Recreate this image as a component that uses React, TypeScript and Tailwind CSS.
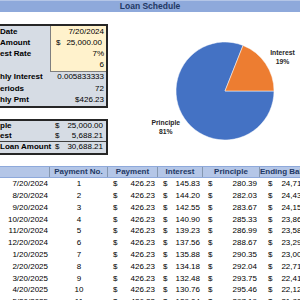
const schedule = [
  ['7/20/2024', 1, '426.23', '145.83', '280.39', '24,719.61'],
  ['8/20/2024', 2, '426.23', '144.20', '282.03', '24,437.58'],
  ['9/20/2024', 3, '426.23', '142.55', '283.67', '24,153.91'],
  ['10/20/2024', 4, '426.23', '140.90', '285.33', '23,868.58'],
  ['11/20/2024', 5, '426.23', '139.23', '286.99', '23,581.59'],
  ['12/20/2024', 6, '426.23', '137.56', '288.67', '23,292.92'],
  ['1/20/2025', 7, '426.23', '135.88', '290.35', '23,002.57'],
  ['2/20/2025', 8, '426.23', '134.18', '292.04', '22,710.53'],
  ['3/20/2025', 9, '426.23', '132.48', '293.75', '22,416.78'],
  ['4/20/2025', 10, '426.23', '130.76', '295.46', '22,121.32'],
  ['5/20/2025', 11, '426.23', '129.04', '297.19', '21,824.13'],
]

// accounting style cell: "$" on the left, amount on the right
function Money({ value, className = '' }: { value: string; className?: string }) {
  return (
    <div className={`flex justify-between pl-[5px] pr-[3px] ${className}`}>
      <span>$</span>
      <span>{value}</span>
    </div>
  )
}

function InputRow({ label, children, last = false }: { label: string; children: React.ReactNode; last?: boolean }) {
  return (
    <div className="flex h-[11.4px] items-center">
      <div className="w-[50px] h-full bg-[#D6DCE4] font-bold flex items-center">{label}</div>
      <div
        className={`flex-1 h-full bg-[#FFF2CC] border-l border-[#7f7f7f] flex items-center justify-end pr-[2px] ${
          last ? 'border-b' : ''
        }`}
      >
        {children}
      </div>
    </div>
  )
}

function CalcRow({ label, value }: { label: string; value: string }) {
  return (
    <div className="flex h-[11.4px] items-center justify-between bg-[#D6DCE4] pr-[2px]">
      <span className="font-bold">{label}</span>
      <span>{value}</span>
    </div>
  )
}

function PieChart() {
  const cx = 117
  const cy = 79
  const r = 49
  const a = (68.4 * Math.PI) / 180
  const px = cx + r * Math.cos(a)
  const py = cy - r * Math.sin(a)
  return (
    <svg width="192" height="142" viewBox="0 0 192 142">
      <path d={`M${cx},${cy} L${px},${py} A${r},${r} 0 1 0 ${cx + r},${cy} Z`} fill="#4472C4" stroke="#fff" strokeWidth="0.5" />
      <path d={`M${cx},${cy} L${cx + r},${cy} A${r},${r} 0 0 0 ${px},${py} Z`} fill="#ED7D31" stroke="#fff" strokeWidth="0.5" />
      <g fontFamily="'Liberation Sans', Arial, sans-serif" fontSize="6.8" fontWeight="bold" fill="#262626" textAnchor="middle">
        <text x="174.5" y="43">Interest</text>
        <text x="174.5" y="52">19%</text>
        <text x="57.8" y="112.5">Principle</text>
        <text x="57.8" y="121.5">81%</text>
      </g>
    </svg>
  )
}

export default function App() {
  return (
    <div className="w-[300px] h-[300px] overflow-hidden bg-white text-black text-[8px] leading-none font-['Liberation_Sans',Arial,sans-serif]">
      <div className="h-[12px] w-full bg-[#8EA9DB] border-t border-[#b4c6e7] flex items-center justify-center font-bold text-[8.5px] text-[#1F3864]">
        Loan Schedule
      </div>

      <div className="flex">
        <div className="w-[108px] shrink-0 flex flex-col">
          <div className="h-[12px]" />
          <div className="border-y-2 border-r-2 border-[#262626] flex flex-col">
            <InputRow label="Date">7/20/2024</InputRow>
            <InputRow label="Amount">
              <div className="w-full flex justify-between pl-[5px] pr-[2px]">
                <span>$</span>
                <span>25,000.00</span>
              </div>
            </InputRow>
            <InputRow label="est Rate">7%</InputRow>
            <InputRow label="" last>
              6
            </InputRow>
            <CalcRow label="hly  Interest" value="0.005833333" />
            <CalcRow label="eriods" value="72" />
            <CalcRow label="hly Pmt" value="$426.23" />
          </div>
          <div className="h-[11.5px]" />
          <div className="border-y-2 border-r-2 border-[#262626] bg-[#D6DCE4] flex flex-col">
            <div className="flex h-[10.5px] items-center">
              <span className="w-[50px] font-bold">ple</span>
              <Money value="25,000.00" className="flex-1" />
            </div>
            <div className="flex h-[10.5px] items-center border-b border-[#404040]">
              <span className="w-[50px] font-bold">est</span>
              <Money value="5,688.21" className="flex-1" />
            </div>
            <div className="flex h-[10.5px] items-center">
              <span className="w-[50px] font-bold whitespace-nowrap">Loan Amount</span>
              <Money value="30,688.21" className="flex-1" />
            </div>
          </div>
        </div>
        <div className="flex-1">
          <PieChart />
        </div>
      </div>

      <div className="h-[11.5px]" />

      <div className="w-[320px]">
        <div className="flex h-[12px] bg-[#B4C6E7] border-y border-[#8EA9DB] font-bold text-[#1F3864]">
          <div className="w-[50px] border-r border-[#8497B0]" />
          <div className="w-[58px] border-r border-[#8497B0] flex items-center justify-center">Payment No.</div>
          <div className="w-[50px] border-r border-[#8497B0] flex items-center justify-center">Payment</div>
          <div className="w-[45px] border-r border-[#8497B0] flex items-center justify-center">Interest</div>
          <div className="w-[57px] border-r border-[#8497B0] flex items-center justify-center">Principle</div>
          <div className="w-[60px] flex items-center justify-center whitespace-nowrap">Ending Balance</div>
        </div>
        {schedule.map(([date, no, pmt, interest, principal, balance]) => (
          <div key={String(no)} className="flex h-[11.8px] items-center">
            <div className="w-[50px] text-right pr-[2px]">{date}</div>
            <div className="w-[58px] text-center">{no}</div>
            <Money value={String(pmt)} className="w-[50px]" />
            <Money value={String(interest)} className="w-[45px]" />
            <Money value={String(principal)} className="w-[57px]" />
            <Money value={String(balance)} className="w-[60px] pl-[8px]" />
          </div>
        ))}
      </div>
    </div>
  )
}
